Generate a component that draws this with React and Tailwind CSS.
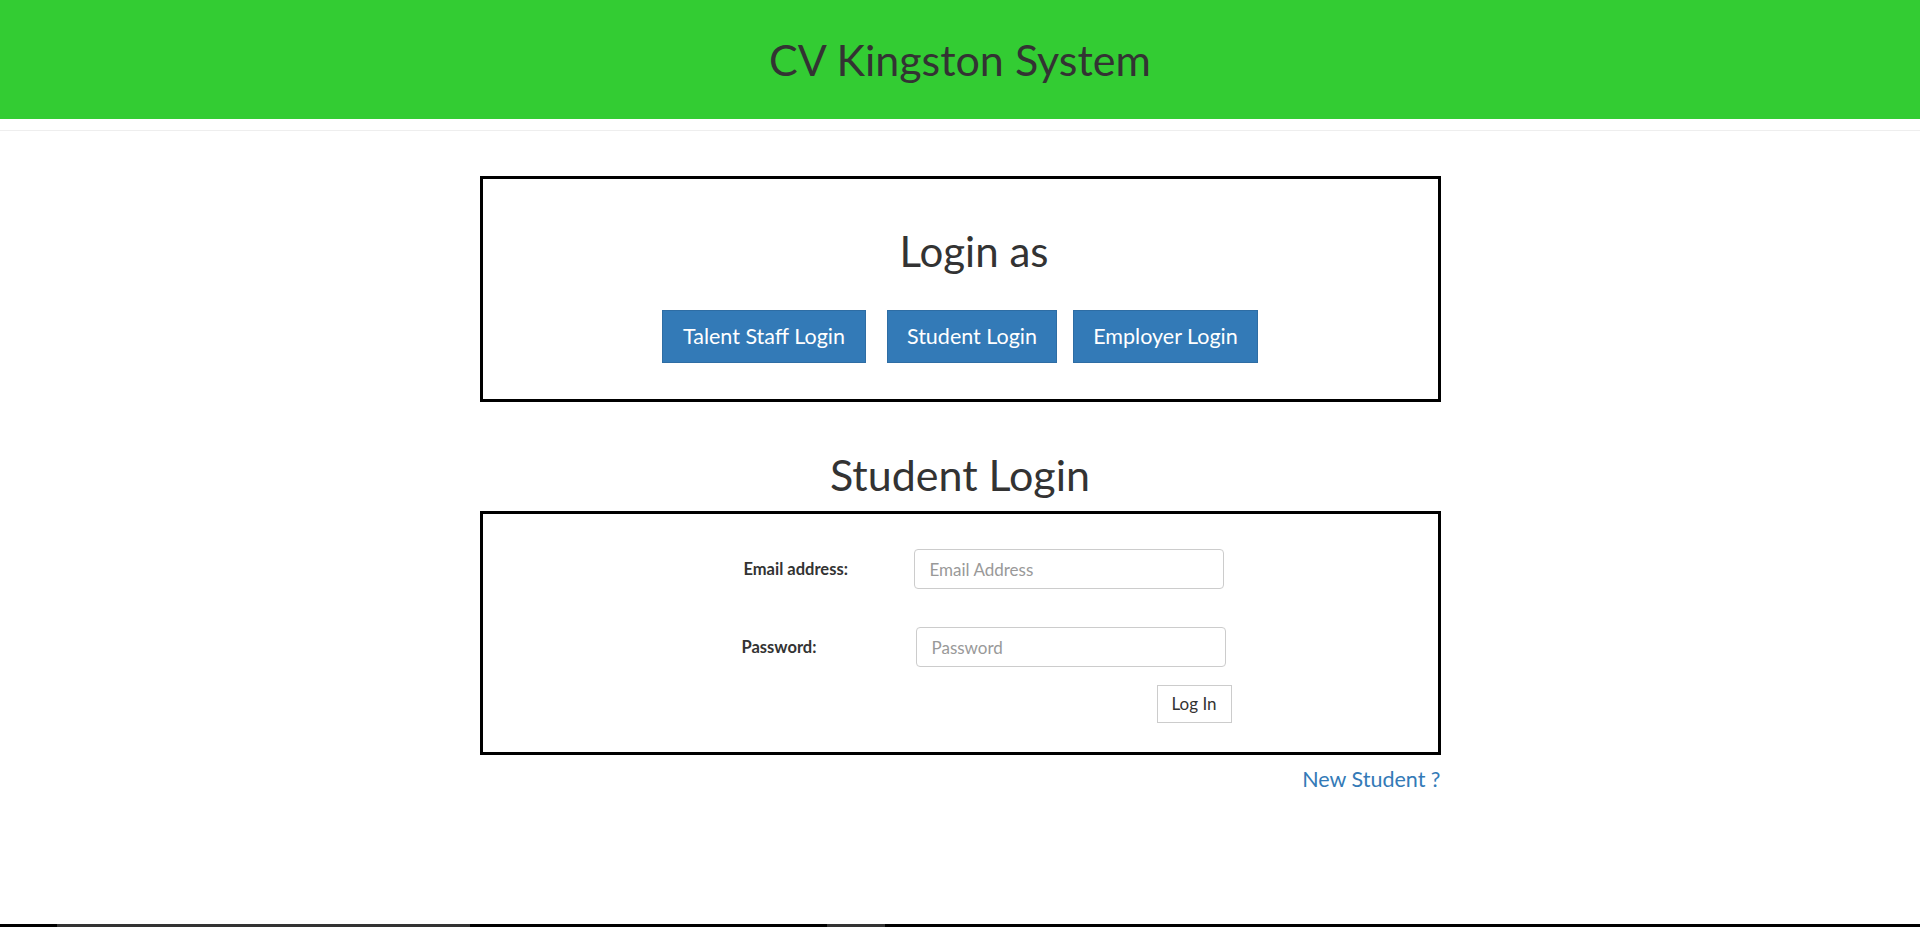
function RoleButton({ label, width, className = "" }) {
  return (
    <button
      className={`h-[53px] border border-[#2e6da4] bg-[#337ab7] text-[21.5px] text-white ${width} ${className}`}
    >
      {label}
    </button>
  );
}

export default function App() {
  return (
    <div className="flex min-h-[927px] flex-col bg-white font-['Lato','Liberation_Sans',sans-serif] text-[#333]">
      <header className="flex h-[119px] items-center justify-center bg-[#33cc33]">
        <h1 className="text-[43px] leading-none text-[#333]">CV Kingston System</h1>
      </header>
      <div className="h-[12px] border-b border-[#eee]" />

      <main className="mx-auto mt-[45px] w-[961px]">
        <section className="flex h-[226px] flex-col items-center border-[3px] border-black pt-[49px]">
          <h2 className="pl-[28px] text-[42px] leading-[46px]">Login as</h2>
          <div className="mt-[36px] flex">
            <RoleButton label="Talent Staff Login" width="w-[204px]" className="mr-[21px]" />
            <RoleButton label="Student Login" width="w-[170px]" className="mr-[16px]" />
            <RoleButton label="Employer Login" width="w-[185px]" />
          </div>
        </section>

        <h2 className="mt-[50px] text-center text-[43px] leading-[46px]">Student Login</h2>

        <section className="mt-[13px] flex h-[244px] flex-col border-[3px] border-black pt-[35px]">
          <div className="flex h-[40px] items-center">
            <label className="ml-[261px] w-[170px] text-[16.5px] font-bold text-[#333]">Email address:</label>
            <input
              type="email"
              placeholder="Email Address"
              className="h-[40px] w-[310px] rounded-[4px] border border-[#ccc] px-[15px] text-[17px] text-[#555] outline-none placeholder:text-[#999]"
            />
          </div>
          <div className="mt-[38px] flex h-[40px] items-center">
            <label className="ml-[259px] w-[174px] text-[16.5px] font-bold text-[#333]">Password:</label>
            <input
              type="password"
              placeholder="Password"
              className="h-[40px] w-[310px] rounded-[4px] border border-[#ccc] px-[15px] text-[17px] text-[#555] outline-none placeholder:text-[#999]"
            />
          </div>
          <div className="mt-[18px] flex">
            <button className="ml-[674px] h-[38px] w-[75px] border border-[#ccc] bg-white text-[17px] text-[#333]">
              Log In
            </button>
          </div>
        </section>

        <div className="mt-[8px] text-right">
          <a href="#" className="text-[21.5px] text-[#337ab7]">
            New Student ?
          </a>
        </div>
      </main>

      <div className="mt-auto flex h-[3px] bg-black">
        <div className="ml-[57px] w-[413px] bg-[#333]" />
        <div className="ml-[357px] w-[58px] bg-[#333]" />
      </div>
    </div>
  );
}
